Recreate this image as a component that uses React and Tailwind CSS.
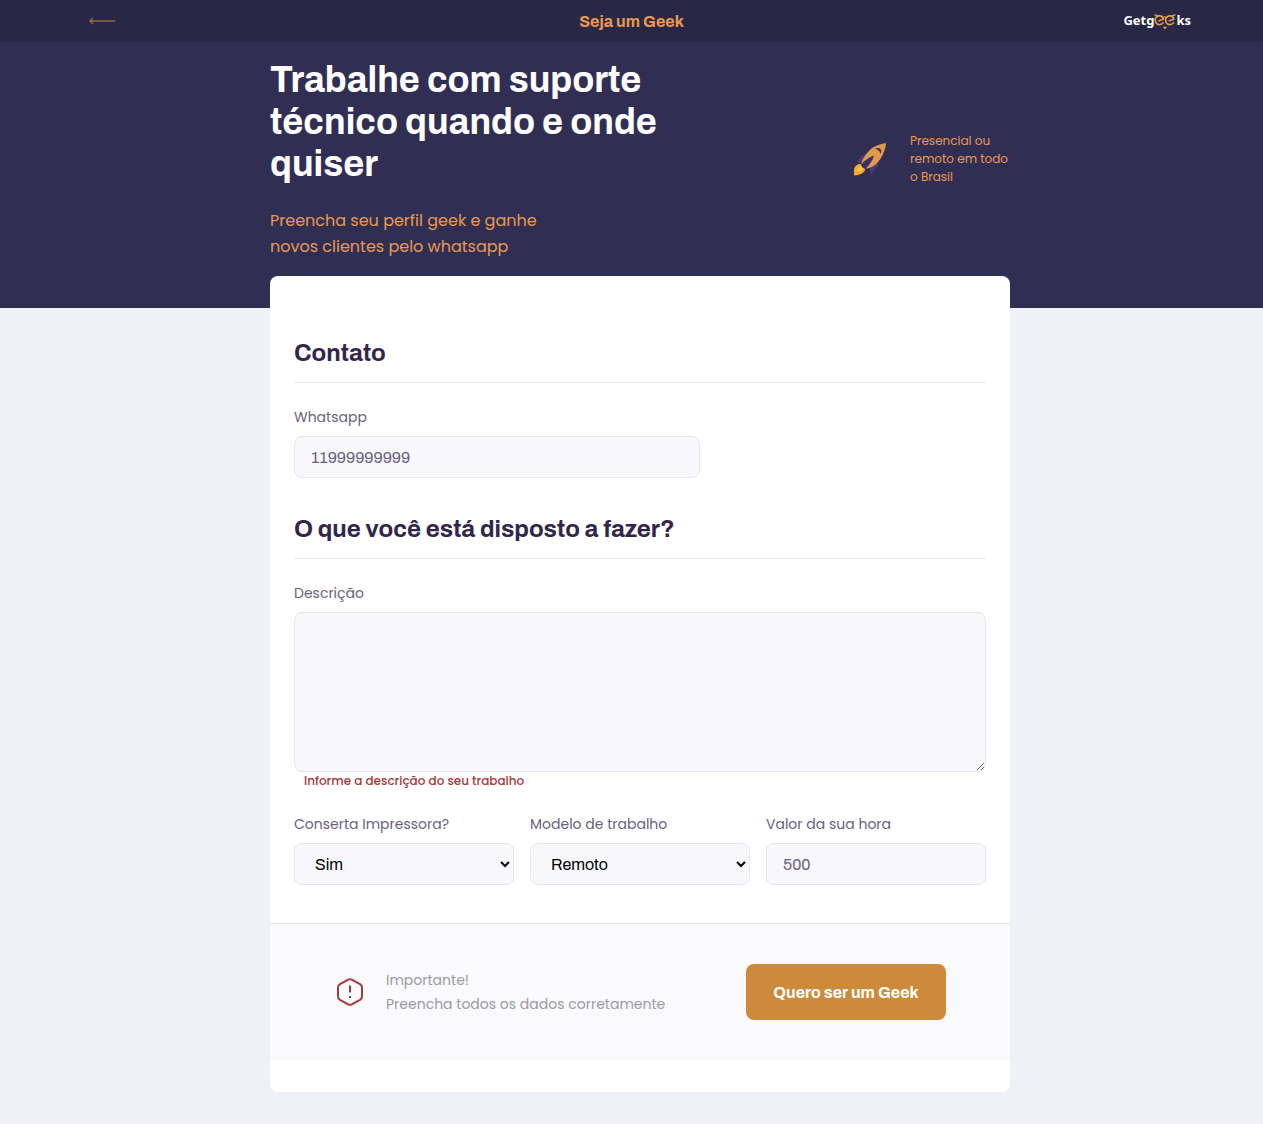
import React from "react";

const heading = "font-['Archivo','Liberation_Sans',sans-serif]";
const field =
  "w-full rounded-lg border border-[#e6e6f0] bg-[#f8f8fc] text-base text-[#6a6180] placeholder:text-[#6a6180] outline-none";

function BackArrow() {
  return (
    <svg width="26" height="8" viewBox="0 0 26 8" fill="none" stroke="#d38f4a" strokeOpacity="0.6">
      <path d="M26 4H1" strokeWidth="1.6" />
      <path d="M4 1L1 4l3 3" strokeWidth="1.4" />
    </svg>
  );
}

function Logo() {
  return (
    <a
      href="#inicio"
      aria-label="Getgeeks"
      className="flex items-start font-['Noto_Sans',sans-serif] text-[13px] leading-5 font-bold text-white"
    >
      <span>Getg</span>
      <svg width="22" height="20" viewBox="0 0 22 20" fill="none" stroke="#e39c4c" strokeWidth="1.7">
        <path d="M.4 4.900L4.500 5.800M21.600 4.900L17.500 5.800" strokeWidth="1.3" />
        <path d="M4.200 11L9.400 9.200C8.800 6.600 6.800 5.600 5 5.900C2.600 6.300 1.100 8.300 1.300 10.600C1.500 13 3.500 14.700 5.800 14.600C7.400 14.500 8.700 13.800 9.600 12.400" />
        <path d="M14.600 11L19.800 9.200C19.200 6.600 17.200 5.600 15.400 5.900C13 6.300 11.500 8.300 11.700 10.600C11.900 13 13.900 14.700 16.200 14.600C17.800 14.500 19.100 13.800 20 12.400" />
        <path d="M9 7.500Q10.600 6.400 12.200 7.500" strokeWidth="1.2" />
        <path d="M8.800 16.800h4.400l-2.200 2.700z" fill="#e39c4c" stroke="none" />
      </svg>
      <span>ks</span>
    </a>
  );
}

function Rocket() {
  return (
    <svg width="32" height="33" viewBox="0 0 32 33" className="shrink-0">
      <path d="M2.500 19.500L7.500 13 14 9.500 10 20z" fill="#463d72" />
      <path d="M24.500 17L24 23 16.700 31.500 15 23z" fill="#463d72" />
      <path d="M32 .3C24.500 1 18.500 4 14.500 8.500 11 12.500 8 16.500 7.200 20.500L12 25.500C18 25 22.500 21.500 26 16.500 29.500 11.500 31.500 6 32 .3z" fill="#e09a4d" />
      <path d="M0 32.500V25.500C1.500 22.500 4 20.500 6.500 21 8.500 21.600 11 24 11.300 26 11 29.500 6.500 32.300 0 32.500z" fill="#f8a62b" />
      <path d="M2.500 29C2.500 25 4.500 22.800 6.500 23 8 23.600 9.200 24.800 9.400 26 8.500 28 5.500 29.200 2.500 29z" fill="#ffc24a" />
      <path d="M21 5.800C23.500 4.600 25.500 5 26.800 6.500 27.600 8 27.400 9.500 26.600 10.800 25.800 8.200 24 6.600 21 5.800z" fill="#3a3265" />
      <path d="M20 12.500C16.500 13.500 11 17 7 21.500 7.500 24 9.300 25.800 11.500 26 15 22.500 18.800 17.500 20 12.500z" fill="#3a3265" />
    </svg>
  );
}

function Warning() {
  return (
    <svg width="28" height="28" viewBox="0 0 28 28" fill="none" stroke="#a8373c" strokeWidth="2" className="shrink-0">
      <path d="M12.200 1.700Q14 .8 15.800 1.700L24 6.200Q26 7.400 26 9.400V18.600Q26 20.600 24 21.800L15.800 26.300Q14 27.200 12.200 26.300L4 21.800Q2 20.600 2 18.600V9.400Q2 7.400 4 6.200Z" />
      <path d="M14 7.500v7M14 18v2" />
    </svg>
  );
}

function Field({ id, label, children }) {
  return (
    <div>
      <label htmlFor={id} className="block text-sm leading-6 text-[#6a6180]">
        {label}
      </label>
      <div className="mt-[7px] flex">{children}</div>
    </div>
  );
}

function Legend({ children }) {
  return (
    <h2 className={`${heading} border-b border-[#e6e6f0] pb-4 text-2xl leading-[26px] font-bold text-[#32264d]`}>
      {children}
    </h2>
  );
}

export default function App() {
  return (
    <div className="min-h-screen bg-[#f0f0f7] pb-8 font-['Poppins','Inter',sans-serif]">
      <div className="bg-[#312e54] pb-12">
        <header className="grid h-[42px] grid-cols-[1fr_auto_1fr] items-center bg-[#292746]">
          <a href="#voltar" aria-label="Voltar" className="justify-self-start pl-[89px]">
            <BackArrow />
          </a>
          <span className={`${heading} pt-0.5 text-base font-bold text-[#e8994f]`}>Seja um Geek</span>
          <div className="justify-self-end pr-[72px] pb-0.5">
            <Logo />
          </div>
        </header>
        <div className="pl-[17px]">
          <div className="mx-auto flex max-w-[740px] items-center justify-between pt-4">
            <div>
              <h1 className={`${heading} max-w-[400px] pt-px text-4xl leading-[42px] font-bold text-white`}>
                Trabalhe com suporte técnico quando e onde quiser
              </h1>
              <p className="mt-[23px] max-w-[290px] text-base leading-[26px] text-[#e8994f]">
                Preencha seu perfil geek e ganhe novos clientes pelo whatsapp
              </p>
            </div>
            <div className="flex items-center gap-6">
              <Rocket />
              <p className="w-[100px] text-xs leading-[18px] text-[#e8994f]">Presencial ou remoto em todo o Brasil</p>
            </div>
          </div>
        </div>
      </div>

      <main className="-mt-8 pl-[17px]">
        <form className="mx-auto max-w-[740px] rounded-lg bg-white pt-16 pb-8" onSubmit={(e) => e.preventDefault()}>
          <section className="px-6">
            <Legend>Contato</Legend>
            <div className="mt-[22px] max-w-[406px]">
              <Field id="whatsapp" label="Whatsapp">
                <input id="whatsapp" placeholder="11999999999" className={`${field} ${heading} h-[42px] px-4`} />
              </Field>
            </div>
          </section>

          <section className="mt-[38px] px-6">
            <Legend>O que você está disposto a fazer?</Legend>
            <div className="mt-[22px]">
              <Field id="descricao" label="Descrição">
                <textarea id="descricao" className={`${field} ${heading} h-40 resize-y px-4 py-2`} />
              </Field>
              <p className="pl-[10px] text-xs leading-[18px] font-medium text-[#a8373c]">
                Informe a descrição do seu trabalho
              </p>
            </div>
            <div className="mt-[22px] grid grid-cols-3 gap-4">
              <Field id="impressora" label="Conserta Impressora?">
                <select id="impressora" className={`${field} ${heading} h-[42px] px-4 text-black`}>
                  <option>Sim</option>
                  <option>Não</option>
                </select>
              </Field>
              <Field id="modelo" label="Modelo de trabalho">
                <select id="modelo" className={`${field} ${heading} h-[42px] px-4 text-black`}>
                  <option>Remoto</option>
                  <option>Presencial</option>
                </select>
              </Field>
              <Field id="valor" label="Valor da sua hora">
                <input id="valor" placeholder="500" className={`${field} ${heading} h-[42px] px-4`} />
              </Field>
            </div>
          </section>

          <footer className="mt-[38px] flex items-center justify-between border-t border-[#e6e6f0] bg-[#fafafc] py-10 pr-16 pl-[66px]">
            <div className="flex items-center gap-[22px]">
              <Warning />
              <p className="text-sm leading-6 text-[#9c98a6]">
                Importante!
                <br />
                Preencha todos os dados corretamente
              </p>
            </div>
            <button
              type="submit"
              className={`${heading} h-14 w-[200px] rounded-lg bg-[#cd8a3a] pt-0.5 text-base font-bold text-white`}
            >
              Quero ser um Geek
            </button>
          </footer>
        </form>
      </main>
    </div>
  );
}
